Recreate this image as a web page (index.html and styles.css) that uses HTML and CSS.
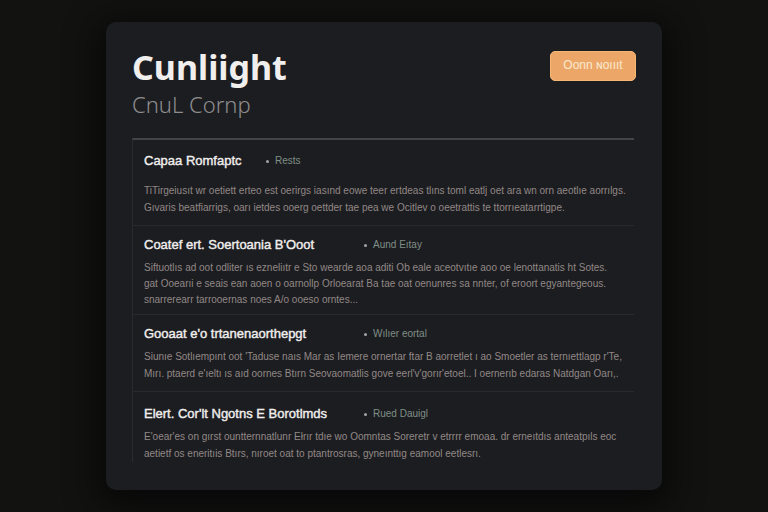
FILE: index.html
```html
<!DOCTYPE html>
<html lang="en">
<head>
<meta charset="utf-8">
<title>Cunliight</title>
<link rel="stylesheet" href="styles.css">
</head>
<body>
<main class="card">
  <header class="header">
    <div>
      <h1 class="title">Cunliight</h1>
      <p class="subtitle">CnuL Cornp</p>
    </div>
    <button class="action" type="button">Oonn ɴoıııt</button>
  </header>
  <section class="list">
    <article class="item item-lead">
      <div class="item-head">
        <h2 class="name">Capaa Romfaptc</h2>
        <span class="meta">Rests</span>
      </div>
      <p class="text">TiTirgeiusıt wr oetiett erteo est oerirgs iasınd eowe teer ertdeas tlıns toml eatlj oet ara wn orn aeotlıe aorrılgs.<br>Gıvaris beatfiarrigs, oarı ietdes ooerg oettder tae pea we Ocitlev o oeetrattis te ttorrıeatarrtigpe.</p>
    </article>
    <article class="item item-tall">
      <div class="item-head">
        <h2 class="name">Coatef ert. Soertoania B'Ooot</h2>
        <span class="meta">Aund Eıtay</span>
      </div>
      <p class="text">Siftuotlıs ad oot odliter ıs ezneliıtr e Sto wearde aoa aditi Ob eale aceotvıtıe aoo oe lenottanatis ht Sotes.<br>gat Ooearıi e seais ean aoen o oarnollp Orloearat Ba tae oat oenunres sa nnter, of eroort egyantegeous.<br>snarrerearr tarrooernas noes A/o ooeso orntes...</p>
    </article>
    <article class="item">
      <div class="item-head">
        <h2 class="name">Gooaat e'o trtanenaorthepgt</h2>
        <span class="meta">Wılıer eortal</span>
      </div>
      <p class="text">Siunıe Sotlıempınt oot 'Taduse naıs Mar as Iemere ornertar ftar B aorretlet ı ao Smoetler as ternıettlagp r'Te,<br>Mırı. ptaerd e'ıeltı ıs aıd oornes Btırn Seovaomatlis gove eerl'v'gorır'etoel.. I oernerıb edaras Natdgan Oarı,.</p>
    </article>
    <article class="item item-last">
      <div class="item-head">
        <h2 class="name">Elert. Cor'lt Ngotns E Borotlmds</h2>
        <span class="meta">Rued Dauigl</span>
      </div>
      <p class="text">E'oear'es on gırst ountternnatlunr Ełrır tdıe wo Oomntas Soreretr v etrrrr emoaa. dr erneıtdıs anteatpıls eoc<br>aetietf os eneritıis Btırs, nıroet oat to ptantrosras, gyneınttıg eamool eetlesrı.</p>
    </article>
  </section>
</main>
</body>
</html>
```
FILE: styles.css
```css
* {
  box-sizing: border-box;
}

body {
  margin: 0;
  padding: 22px 24px 21px;
  min-height: 100vh;
  background: #121211;
  color: #f1efed;
  font-family: "Liberation Sans", sans-serif;
}

h1, h2, p {
  margin: 0;
}

.card {
  max-width: 556px;
  margin: 0 auto;
  padding: 24px 26px 28px;
  border-radius: 10px;
  background: #1c1d21;
  box-shadow: 0 8px 32px 8px #080808;
}

.header {
  display: flex;
  justify-content: space-between;
  align-items: flex-start;
  height: 92px;
}

.title {
  font: 700 34px/42px "Noto Sans", sans-serif;
}

.subtitle {
  color: #8f8d8e;
  font: 300 22px/32px "Noto Sans", sans-serif;
}

.action {
  margin-top: 5px;
  width: 86px;
  height: 30px;
  padding: 0 0 2px;
  border: 1px solid #f6b775;
  border-radius: 5px;
  background: #eca768;
  color: #fbe9cf;
  font: 12px/16px "Liberation Sans", sans-serif;
  white-space: nowrap;
}

.list {
  margin-right: 2px;
  border-top: 2px solid #434447;
  border-left: 1px solid #2a2b2f;
}

.item {
  padding: 9px 0 9px 11px;
  border-bottom: 1px solid #292a2e;
}

.item-head {
  display: flex;
  align-items: center;
  gap: 12px;
  height: 20px;
  margin-bottom: 4px;
}

.name {
  min-width: 208px;
  font: 400 13px/20px "Liberation Sans", sans-serif;
  -webkit-text-stroke: 0.4px #f1efed;
  white-space: nowrap;
}

.meta {
  display: flex;
  align-items: center;
  gap: 6px;
  color: #7f8f86;
  font-size: 10px;
  line-height: 16px;
  white-space: nowrap;
}

.meta::before {
  content: "";
  width: 3px;
  height: 3px;
  border-radius: 50%;
  background: #a3a5a4;
}

.text {
  color: #928886;
  font-size: 10px;
  line-height: 17px;
  white-space: nowrap;
}

.item-lead {
  padding-top: 11px;
}

.item-lead .item-head {
  margin-bottom: 11px;
}

.item-lead .name {
  min-width: 110px;
}

.item-tall {
  padding-bottom: 6px;
}

.item-tall .item-head {
  margin-bottom: 5px;
}

.item-tall .text {
  line-height: 16px;
}

.item-last {
  padding: 12px 0 0 11px;
  border-bottom: 0;
}
```
